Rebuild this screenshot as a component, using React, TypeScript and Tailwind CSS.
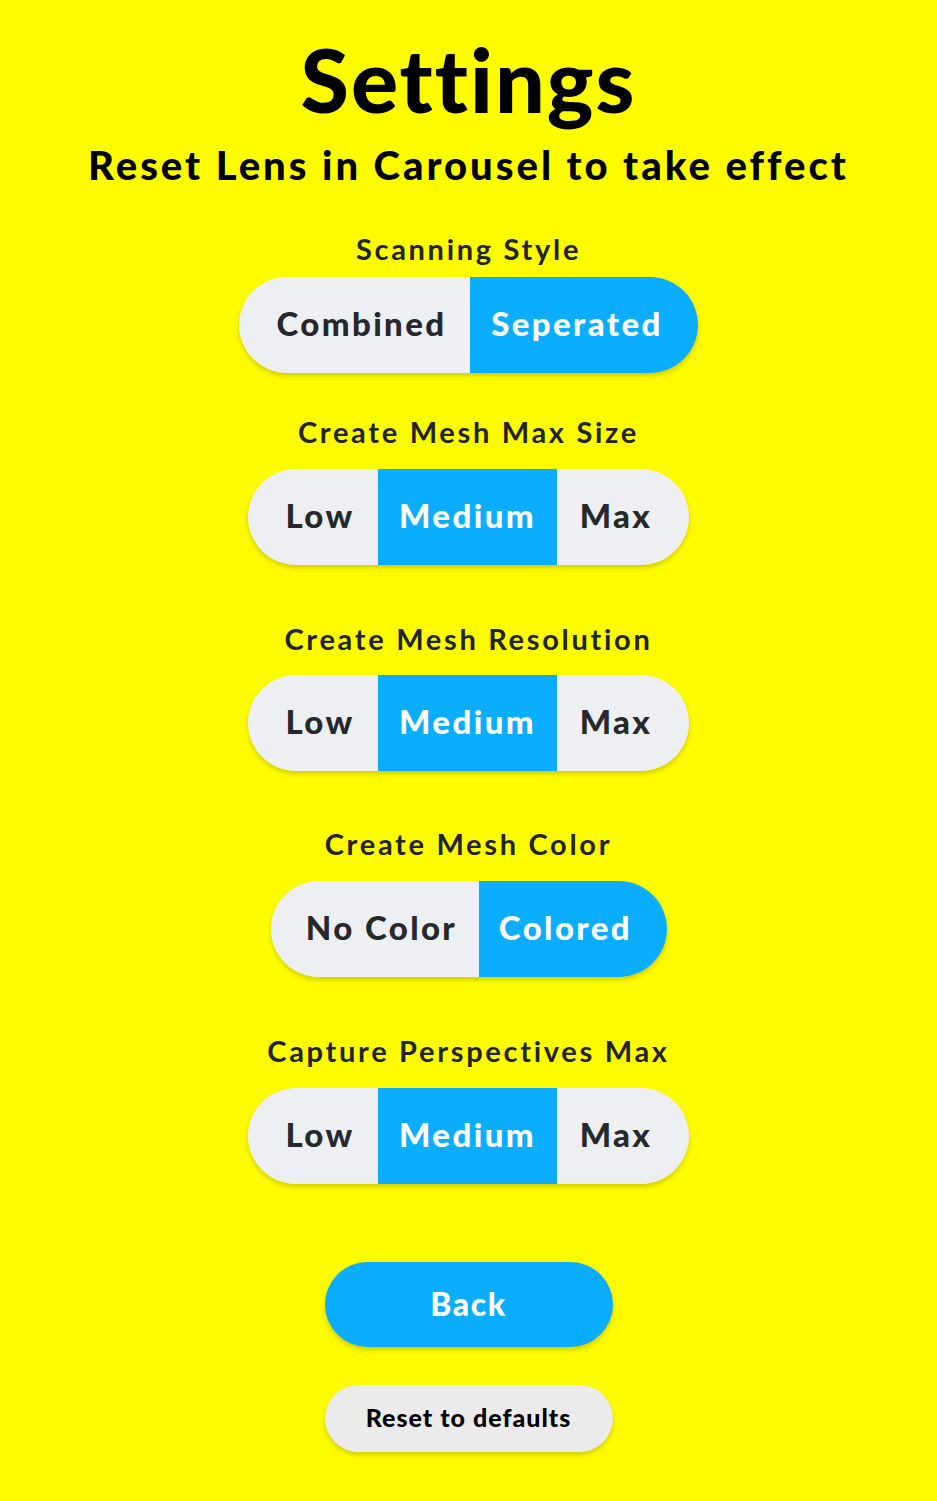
import React from "react";

const font = { fontFamily: "Lato, 'Open Sans', sans-serif" };

function Segmented({ options, widths, active }: { options: string[]; widths: number[]; active: number }) {
  const last = options.length - 1;
  return (
    <div className="flex h-[96px] overflow-hidden rounded-full shadow-[0_3px_5px_rgba(0,0,0,0.18)]">
      {options.map((o, i) => (
        <div
          key={o}
          style={{ width: widths[i] }}
          className={
            "flex h-full items-center justify-center pb-[3px] text-[33px] font-black tracking-[2.4px] " +
            (i === 0 ? "pl-[14px] " : "") +
            (i === last ? "pr-[14px] " : "") +
            (i === active ? "bg-[#0aadff] text-white" : "bg-[#edeff2] text-[#25282d]")
          }
        >
          {o}
        </div>
      ))}
    </div>
  );
}

function Label({ children }: { children: React.ReactNode }) {
  return <div className="h-[40px] text-[29px] font-bold leading-[40px] text-[#222427] tracking-[2.7px]">{children}</div>;
}

export default function App() {
  return (
    <div className="flex min-h-[1501px] w-full flex-col items-center bg-[#fffc00]" style={font}>
      <h1 className="mt-[35px] text-[88px] font-black leading-[88px] text-black tracking-[2px]">Settings</h1>
      <div className="mt-[18px] text-[40px] font-black leading-[48px] text-black tracking-[3px]">
        Reset Lens in Carousel to take effect
      </div>

      <div className="mt-[40px]">
        <Label>Scanning Style</Label>
      </div>
      <div className="mt-[8px]">
        <Segmented options={["Combined", "Seperated"]} widths={[231, 228]} active={1} />
      </div>

      <div className="mt-[39px]">
        <Label>Create Mesh Max Size</Label>
      </div>
      <div className="mt-[17px]">
        <Segmented options={["Low", "Medium", "Max"]} widths={[130, 179, 132]} active={1} />
      </div>

      <div className="mt-[54px]">
        <Label>Create Mesh Resolution</Label>
      </div>
      <div className="mt-[16px]">
        <Segmented options={["Low", "Medium", "Max"]} widths={[130, 179, 132]} active={1} />
      </div>

      <div className="mt-[53px]">
        <Label>Create Mesh Color</Label>
      </div>
      <div className="mt-[17px]">
        <Segmented options={["No Color", "Colored"]} widths={[208, 188]} active={1} />
      </div>

      <div className="mt-[54px]">
        <Label>Capture Perspectives Max</Label>
      </div>
      <div className="mt-[17px]">
        <Segmented options={["Low", "Medium", "Max"]} widths={[130, 179, 132]} active={1} />
      </div>

      <button className="mt-[78px] flex h-[85px] w-[288px] items-center justify-center rounded-full bg-[#0aadff] pb-[2px] text-[32px] font-black tracking-[1.5px] text-white shadow-[0_3px_5px_rgba(0,0,0,0.18)]">
        Back
      </button>
      <button className="mt-[38px] flex h-[67px] w-[288px] items-center justify-center rounded-full bg-[#ebebeb] pb-[2px] text-[25px] font-black tracking-[1px] text-black shadow-[0_3px_5px_rgba(0,0,0,0.18)]">
        Reset to defaults
      </button>
    </div>
  );
}
